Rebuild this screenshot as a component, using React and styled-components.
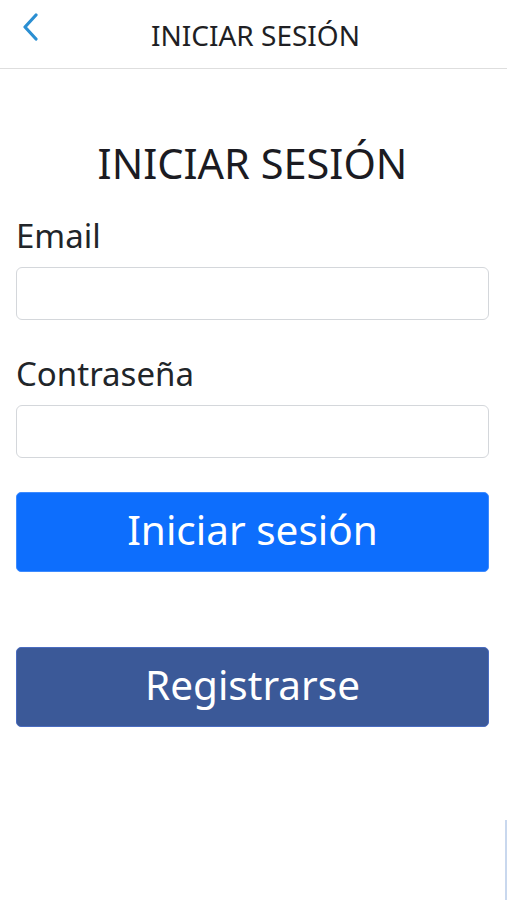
import React from "react";
import styled, { createGlobalStyle } from "styled-components";

const GlobalStyle = createGlobalStyle`
  html, body {
    margin: 0;
    padding: 0;
    background: #ffffff;
  }
  body {
    font-family: "Noto Sans", "Open Sans", sans-serif;
    color: #212529;
  }
  * {
    box-sizing: border-box;
  }
`;

const Page = styled.div`
  width: 507px;
  min-height: 900px;
  position: relative;
  background: #ffffff;
`;

const TopBar = styled.header`
  height: 69px;
  display: flex;
  align-items: center;
  justify-content: center;
  position: relative;
  border-bottom: 1px solid #dedede;
  padding-top: 2px;
`;

const BackButton = styled.button`
  position: absolute;
  left: 14px;
  top: 10px;
  width: 32px;
  height: 34px;
  padding: 0;
  border: none;
  background: transparent;
  display: flex;
  align-items: center;
  justify-content: center;
  cursor: pointer;
`;

const TopTitle = styled.h1`
  margin: 0 0 0 4px;
  font-size: 28px;
  line-height: 1;
  font-weight: 400;
  color: #1f1f24;
`;

const Content = styled.main`
  padding: 69px 18px 0 16px;
  display: flex;
  flex-direction: column;
`;

const Heading = styled.h2`
  margin: 0 0 28px;
  font-size: 41.5px;
  line-height: 50px;
  font-weight: 400;
  text-align: center;
  color: #1b1b22;
`;

const Field = styled.div`
  display: flex;
  flex-direction: column;
  gap: 11px;
  margin-bottom: ${(p) => p.$spacing || 0}px;
`;

const Label = styled.label`
  font-size: 33px;
  line-height: 40px;
  color: #212529;
`;

const Input = styled.input`
  height: 53px;
  width: 100%;
  border: 1px solid #d4d7db;
  border-radius: 6px;
  padding: 0 12px;
  font-size: 20px;
  font-family: inherit;
  outline: none;
  background: #ffffff;
`;

const Button = styled.button`
  width: 100%;
  height: 80px;
  border-radius: 5px;
  border: 1px solid ${(p) => (p.$variant === "facebook" ? "#4a6cc0" : "#3d8bff")};
  background: ${(p) => (p.$variant === "facebook" ? "#3b5998" : "#0d6efd")};
  color: #ffffff;
  font-family: inherit;
  font-size: 40.5px;
  line-height: 1;
  padding: 0 0 4px;
  cursor: pointer;
  margin-bottom: ${(p) => p.$spacing || 0}px;
`;

const ScrollMark = styled.div`
  position: absolute;
  right: 0;
  top: 820px;
  width: 2px;
  height: 80px;
  background: #c9d8ee;
`;

const App = () => {
  return (
    <Page>
      <GlobalStyle />
      <TopBar>
        <BackButton aria-label="Volver">
          <svg width="18" height="28" viewBox="0 0 18 28" fill="none">
            <path
              d="M15 2 L4 14 L15 26"
              stroke="#2b8fd2"
              strokeWidth="3.2"
              strokeLinecap="round"
              strokeLinejoin="round"
            />
          </svg>
        </BackButton>
        <TopTitle>INICIAR SESIÓN</TopTitle>
      </TopBar>
      <Content>
        <Heading>INICIAR SESIÓN</Heading>
        <Field $spacing={34}>
          <Label htmlFor="email">Email</Label>
          <Input id="email" type="email" />
        </Field>
        <Field $spacing={34}>
          <Label htmlFor="password">Contraseña</Label>
          <Input id="password" type="password" />
        </Field>
        <Button $spacing={75}>Iniciar sesión</Button>
        <Button $variant="facebook">Registrarse</Button>
      </Content>
      <ScrollMark />
    </Page>
  );
};

export default App;
